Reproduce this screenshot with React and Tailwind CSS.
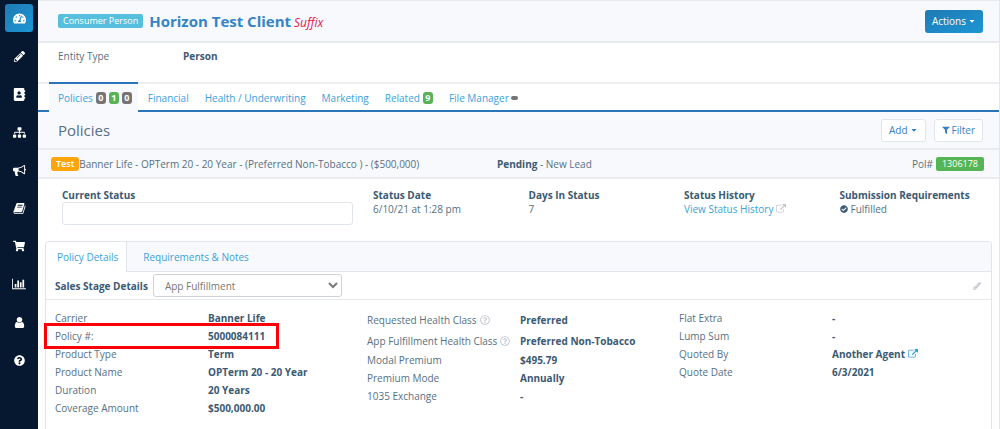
import React, { useState } from 'react';
import clsx from 'clsx';
import {
  FaTachometerAlt,
  FaPencilAlt,
  FaAddressBook,
  FaSitemap,
  FaShoppingCart,
  FaQuestionCircle,
  FaRegQuestionCircle,
  FaCheckCircle,
  FaCaretDown,
} from 'react-icons/fa';

const glyph = (viewBox, d) => ({ className }) => (
  <svg viewBox={viewBox} className={className} fill="currentColor" aria-hidden="true">
    <path d={d} />
  </svg>
);

const Bullhorn = glyph(
  '0 0 1792 1792',
  'M1664 640q53 0 90.5 37.5t37.5 90.5-37.5 90.5-90.5 37.5v384q0 52-38 90t-90 38q-417-347-812-380-58 19-91 66t-31 100.5 40 92.5q-20 33-23 65.5t6 58 33.5 55 48 50 61.5 50.5q-29 58-111.5 83t-168.5 11.5-132-55.5q-7-23-29.5-87.5t-32-94.5-23-89-15-101 3.5-98.5 22-110.5h-122q-66 0-113-47t-47-113v-192q0-66 47-113t113-47h480q435 0 896-384 52 0 90 38t38 90v384zm-128 604v-954q-394 302-768 343v270q377 42 768 341z'
);
const Book = glyph(
  '0 0 1792 1792',
  'M1703 478q40 57 18 129l-275 906q-19 64-76.5 107.5t-122.5 43.5h-923q-77 0-148.5-53.5t-99.5-131.5q-24-67-2-127 0-4 3-27t4-37q1-8-3-21.5t-3-19.5q2-11 8-21t16.5-23.5 16.5-23.5q23-38 45-91.5t30-91.5q3-10 .5-30t-.5-28q3-11 17-28t17-23q21-36 42-92t25-90q1-9-2.5-32t.5-28q4-13 22-30.5t22-22.5q19-26 42.5-84.5t27.5-96.5q1-8-3-25.5t-2-26.5q2-8 9-18t18-23 17-21q8-12 16.5-30.5t15-35 16-36 19.5-32 26.5-23.5 36-11.5 47.5 5.5l-1 3q38-9 51-9h761q74 0 114 56t18 130l-274 906q-36 119-71.5 153.5t-128.5 34.5h-869q-27 0-38 15-11 16-1 43 24 70 144 70h923q29 0 56-15.5t35-41.5l300-987q7-22 5-57 38 15 59 43zm-1064 2q-4 13 2 22.5t20 9.5h608q13 0 25.5-9.5t16.5-22.5l21-64q4-13-2-22.5t-20-9.5h-608q-13 0-25.5 9.5t-16.5 22.5zm-83 256q-4 13 2 22.5t20 9.5h608q13 0 25.5-9.5t16.5-22.5l21-64q4-13-2-22.5t-20-9.5h-608q-13 0-25.5 9.5t-16.5 22.5z'
);
const BarChart = glyph(
  '0 0 2048 1792',
  'M640 896v512h-256v-512h256zm384-512v1024h-256v-1024h256zm1024 1152v128h-2048v-1536h128v1408h1920zm-640-896v768h-256v-768h256zm384-384v1152h-256v-1152h256z'
);
const User = glyph(
  '0 0 1792 1792',
  'M1536 1399q0 109-62.5 187t-150.5 78h-854q-88 0-150.5-78t-62.5-187q0-85 8.5-160.5t31.5-152 58.5-131 94-89 134.5-34.5q131 128 313 128t313-128q76 0 134.5 34.5t94 89 58.5 131 31.5 152 8.5 160.5zm-256-887q0 159-112.5 271.5t-271.5 112.5-271.5-112.5-112.5-271.5 112.5-271.5 271.5-112.5 271.5 112.5 112.5 271.5z'
);
const ExternalLink = glyph(
  '0 0 1792 1792',
  'M1408 928v320q0 119-84.5 203.5t-203.5 84.5h-832q-119 0-203.5-84.5t-84.5-203.5v-832q0-119 84.5-203.5t203.5-84.5h704q14 0 23 9t9 23v64q0 14-9 23t-23 9h-704q-66 0-113 47t-47 113v832q0 66 47 113t113 47h832q66 0 113-47t47-113v-320q0-14 9-23t23-9h64q14 0 23 9t9 23zm384-864v512q0 26-19 45t-45 19-45-19l-176-176-652 652q-10 10-23 10t-23-10l-114-114q-10-10-10-23t10-23l652-652-176-176q-19-19-19-45t19-45 45-19h512q26 0 45 19t19 45z'
);
const Filter = glyph(
  '192 128 1408 1536',
  'M1595 295q17 41-14 70l-493 493v742q0 42-39 59-13 5-25 5-27 0-45-19l-256-256q-19-19-19-45v-486l-493-493q-31-29-14-70 17-39 59-39h1280q42 0 59 39z'
);

const navItems = [
  { label: 'Dashboard', Icon: FaTachometerAlt, size: 'size-[13px]', active: true },
  { label: 'Edit', Icon: FaPencilAlt, size: 'size-[11px]' },
  { label: 'Contacts', Icon: FaAddressBook, size: 'size-[13px]' },
  { label: 'Hierarchy', Icon: FaSitemap, size: 'size-[13px]' },
  { label: 'Marketing', Icon: Bullhorn, size: 'size-[13px]' },
  { label: 'Library', Icon: Book, size: 'size-[13px]' },
  { label: 'Store', Icon: FaShoppingCart, size: 'size-3' },
  { label: 'Reports', Icon: BarChart, size: 'h-3 w-3.5' },
  { label: 'Account', Icon: User, size: 'size-[13px]' },
  { label: 'Help', Icon: FaQuestionCircle, size: 'size-[11px]' },
];

const tabs = [
  { label: 'Policies', counts: [{ n: 0 }, { n: 1, green: true }, { n: 0 }], active: true },
  { label: 'Financial' },
  { label: 'Health / Underwriting' },
  { label: 'Marketing' },
  { label: 'Related', counts: [{ n: 9, green: true }] },
  { label: 'File Manager', empty: true },
];

const details = [
  [
    { label: 'Carrier', value: 'Banner Life' },
    { label: 'Policy #:', value: '5000084111', marked: true },
    { label: 'Product Type', value: 'Term' },
    { label: 'Product Name', value: 'OPTerm 20 - 20 Year' },
    { label: 'Duration', value: '20 Years' },
    { label: 'Coverage Amount', value: '$500,000.00' },
  ],
  [
    { label: 'Requested Health Class', value: 'Preferred', help: true },
    { label: 'App Fulfillment Health Class', value: 'Preferred Non-Tobacco', help: true },
    { label: 'Modal Premium', value: '$495.79' },
    { label: 'Premium Mode', value: 'Annually' },
    { label: '1035 Exchange', value: '-' },
  ],
  [
    { label: 'Flat Extra', value: '-' },
    { label: 'Lump Sum', value: '-' },
    { label: 'Quoted By', value: 'Another Agent', link: true },
    { label: 'Quote Date', value: '6/3/2021' },
  ],
];

const Sidebar = () => (
  <nav className="flex w-[38px] shrink-0 flex-col items-center gap-2.5 bg-[#06182f] pt-1">
    {navItems.map(({ label, Icon, size, active }) => (
      <a
        key={label}
        href="#"
        aria-label={label}
        className={clsx(
          'flex size-7 items-center justify-center rounded-[3px] text-white',
          active && 'bg-linear-to-br from-[#1f7ab3] to-[#1c96d6]'
        )}
      >
        <Icon className={size} />
      </a>
    ))}
  </nav>
);

const Tab = ({ label, counts = [], empty, active }) => (
  <a
    href="#"
    className={clsx(
      '-mb-0.5 -mt-0.5 flex items-center gap-[2px] whitespace-nowrap border-t-2 text-[#38a3db]',
      active ? 'mr-0.5 border-[#2a75b8] bg-[#f8f9fd] pl-[9px] pr-1.5' : 'border-transparent px-2'
    )}
  >
    {label}
    {counts.map((c, i) => (
      <span
        key={i}
        className={clsx(
          'ml-px flex h-3 w-2.5 items-center justify-center rounded-[3px] text-[9px] font-bold text-white',
          c.green ? 'bg-[#56b356]' : 'bg-[#757575]'
        )}
      >
        {c.n}
      </span>
    ))}
    {empty && <span className="h-1 w-[7px] rounded-sm bg-[#757575]" />}
  </a>
);

const Fact = ({ title, children }) => (
  <div>
    <h3 className="font-bold text-[#3b5a73]">{title}</h3>
    <div className="flex items-center gap-[3px]">{children}</div>
  </div>
);

const DetailRow = ({ label, value, help, link, marked }) => (
  <div
    className={clsx(
      'relative grid grid-cols-[153px_1fr] items-center whitespace-nowrap',
      help ? 'h-[21px]' : 'h-[18px]'
    )}
  >
    <dt className="flex items-center gap-[3px]">
      {label}
      {help && <FaRegQuestionCircle className="size-2.5 shrink-0 text-[#c3c8ce]" />}
    </dt>
    <dd className="flex items-center gap-[3px] font-bold text-[#3b5a73]">
      {value}
      {link && (
        <a href="#" aria-label="Open agent">
          <ExternalLink className="size-2.5 text-[#2a9fdc]" />
        </a>
      )}
    </dd>
    {marked && <div className="absolute -inset-y-1 -left-[11px] w-[235px] border-3 border-[#fb0007]" />}
  </div>
);

const App = () => {
  const [status, setStatus] = useState('');
  const [stage, setStage] = useState('App Fulfillment');

  return (
    <div className="flex min-h-screen bg-white font-['Open_Sans',sans-serif] text-[10px] leading-[14px] text-[#567083]">
      <Sidebar />
      <main className="flex min-w-0 flex-1 flex-col border-r border-[#e4e7ec]">
        <header className="flex items-center border-b-2 border-t border-[#e6e9ee] bg-[#f8f9fd] pl-5 pr-4">
          <span className="rounded-[2px] bg-[#56bfdd] px-[5px] text-[9px] text-white">Consumer Person</span>
          <h1 className="ml-1.5 text-[15px] font-bold leading-10 text-[#3584c6]">Horizon Test Client</h1>
          <em className="ml-[3px] mt-[3px] text-[12px] text-[#e0174e]">Suffix</em>
          <button
            type="button"
            className="ml-auto flex h-[23px] items-center gap-0.5 rounded-[3px] bg-linear-to-br from-[#1f7ab3] to-[#1c96d6] px-[7px] text-white"
          >
            Actions <FaCaretDown className="size-2" />
          </button>
        </header>

        <div className="flex h-[39px] items-start pl-5 pt-[6px]">
          <span className="w-[125px]">Entity Type</span>
          <strong className="text-[#3b5a73]">Person</strong>
        </div>

        <nav className="flex h-[30px] border-b-2 border-t-2 border-b-[#2a75b8] border-t-[#eceef1] pl-[11px]">
          {tabs.map((tab) => (
            <Tab key={tab.label} {...tab} />
          ))}
        </nav>

        <div className="flex h-[38px] items-center gap-2 border-b-2 border-[#e9ebef] bg-[#f8f9fd] pl-5 pr-4">
          <h2 className="mr-auto text-[15px]">Policies</h2>
          <button type="button" className="flex h-[23px] items-center gap-0.5 rounded-[3px] border border-[#e1e6ec] bg-white px-[7px] text-[#3381c2]">
            Add <FaCaretDown className="size-2" />
          </button>
          <button type="button" className="flex h-[23px] items-center gap-0.5 rounded-[3px] border border-[#e1e6ec] bg-white px-[7px] text-[#3381c2]">
            <Filter className="size-2" /> Filter
          </button>
        </div>

        <div className="flex h-[29px] items-center border-b-2 border-[#e9ebef] bg-[#f8f9fd] pl-[13px] pr-[15px]">
          <div className="flex w-[446px] items-center">
            <span className="rounded-[3px] bg-[#ffa50a] px-[5px] text-[9px] font-semibold text-white">Test</span>
            <span>Banner Life - OPTerm 20 - 20 Year - (Preferred Non-Tobacco ) - ($500,000)</span>
          </div>
          <div>
            <strong className="text-[#3b5a73]">Pending</strong> - New Lead
          </div>
          <div className="ml-auto flex items-center gap-[3px]">
            Pol# <span className="rounded-[2px] bg-[#55b555] px-1.5 text-[9px] text-white">1306178</span>
          </div>
        </div>

        <section className="grid grid-cols-6 pb-4 pl-6 pr-1 pt-[9px]">
          <div className="col-span-2 pr-5">
            <label htmlFor="current-status" className="block font-bold text-[#3b5a73]">
              Current Status
            </label>
            <input
              id="current-status"
              type="text"
              value={status}
              onChange={(e) => setStatus(e.target.value)}
              className="block h-[23px] w-full rounded-[3px] border border-[#e0e4ec] bg-white px-2 focus:outline-none"
            />
          </div>
          <Fact title="Status Date">6/10/21 at 1:28 pm</Fact>
          <Fact title="Days In Status">7</Fact>
          <Fact title="Status History">
            <a href="#" className="flex items-center gap-[3px] whitespace-nowrap text-[#38a3db]">
              View Status History <ExternalLink className="size-2.5 text-[#c3c8ce]" />
            </a>
          </Fact>
          <Fact title="Submission Requirements">
            <FaCheckCircle className="size-2 text-[#3b5a73]" /> Fulfilled
          </Fact>
        </section>

        <section className="mx-[7px] flex-1 rounded-t-[4px] border border-b-0 border-[#e1e5ec]">
          <nav className="flex h-[30px] rounded-t-[4px] border-b border-[#e1e5ec] bg-[#f8f9fd] text-[#38a3db]">
            <a href="#" className="-mb-px flex items-center rounded-tl-[4px] border-r border-[#e1e5ec] bg-white pl-[11px] pr-2">
              Policy Details
            </a>
            <a href="#" className="flex items-center px-4">
              Requirements &amp; Notes
            </a>
          </nav>
          <div className="flex h-7 items-center border-b border-[#e6e9ee] pl-[9px] pr-2.5">
            <label htmlFor="sales-stage" className="font-bold text-[#3b5a73]">
              Sales Stage Details
            </label>
            <select
              id="sales-stage"
              value={stage}
              onChange={(e) => setStage(e.target.value)}
              className="ml-[5px] h-[23px] w-[189px] rounded-[3px] border border-[#cfd3d8] bg-white px-[7px] text-[#777777]"
            >
              <option>App Fulfillment</option>
              <option>Underwriting</option>
              <option>Placed</option>
            </select>
            <button type="button" aria-label="Edit sales stage" className="ml-auto text-[#c3c8ce]">
              <FaPencilAlt className="size-2" />
            </button>
          </div>
          <div className="grid grid-cols-3 items-start pl-[9px] pt-[9px]">
            {details.map((rows, i) => (
              <dl key={i}>
                {rows.map((row) => (
                  <DetailRow key={row.label} {...row} />
                ))}
              </dl>
            ))}
          </div>
        </section>
      </main>
    </div>
  );
};

export default App;
